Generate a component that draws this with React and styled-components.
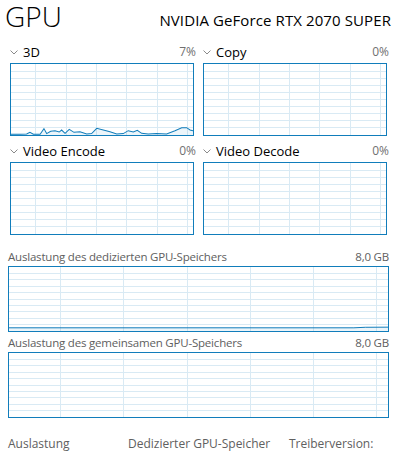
import React from "react";
import styled, { createGlobalStyle } from "styled-components";

const BORDER = "#117dbb";
const GRID = "#d9eaf4";

const engines = [
  {
    name: "3D",
    value: "7%",
    points: [
      [0, 99], [4.9, 99], [8.6, 98.6], [10.4, 96.2], [12.3, 99], [16, 99],
      [18.1, 91], [19.6, 98], [21.8, 94.8], [24.2, 93.9], [26.5, 95.8],
      [27.8, 93], [29.7, 97.6], [32, 92], [34.6, 96.2], [37.9, 95.3],
      [41.6, 98.6], [44.3, 98], [47.1, 90.6], [50.7, 93], [54.4, 95.3],
      [58.1, 98.6], [61.7, 98], [64.4, 93.9], [67.2, 95.8], [69.4, 93.4],
      [71.8, 97.6], [75.4, 98.6], [80, 98], [85.5, 98.6], [90.1, 93.9],
      [93.8, 89.7], [96.5, 89.7], [98.4, 93], [100, 93.9],
    ],
  },
  { name: "Copy", value: "0%" },
  { name: "Video Encode", value: "0%" },
  { name: "Video Decode", value: "0%" },
];

const memory = [
  {
    name: "Auslastung des dedizierten GPU-Speichers",
    value: "8,0 GB",
    gap: 13,
    points: [[0, 95], [91, 95], [94, 94.2], [100, 94]],
  },
  { name: "Auslastung des gemeinsamen GPU-Speichers", value: "8,0 GB", gap: 2 },
];

const vLines = [13.6, 30.3, 47, 63.6, 80.3, 97];
const hLines = [10, 20, 30, 40, 50, 60, 70, 80, 90];

const Graph = ({ points }) => {
  const line = points ? points.map((p) => p.join(",")).join(" ") : null;
  const area = points ? `0,100 ${line} 100,100` : null;
  return (
    <GraphSvg viewBox="0 0 100 100" preserveAspectRatio="none">
      {vLines.map((x) => (
        <line
          key={"v" + x}
          x1={x}
          x2={x}
          y1="0"
          y2="100"
          stroke={GRID}
          strokeWidth="1"
          vectorEffect="non-scaling-stroke"
          shapeRendering="crispEdges"
        />
      ))}
      {hLines.map((y) => (
        <line
          key={"h" + y}
          x1="0"
          x2="100"
          y1={y}
          y2={y}
          stroke={GRID}
          strokeWidth="1"
          vectorEffect="non-scaling-stroke"
          shapeRendering="crispEdges"
        />
      ))}
      {points && (
        <>
          <polygon points={area} fill="rgba(17,125,187,0.08)" />
          <polyline
            points={line}
            fill="none"
            stroke={BORDER}
            strokeWidth="1"
            vectorEffect="non-scaling-stroke"
          />
        </>
      )}
    </GraphSvg>
  );
};

const Chevron = () => (
  <svg width="8" height="5" viewBox="0 0 8 5">
    <polyline points="0.5,0.5 4,4 7.5,0.5" fill="none" stroke="#8a8a8a" strokeWidth="1" />
  </svg>
);

const App = () => {
  return (
    <>
      <GlobalStyle />
      <Page>
        <Header>
          <Title>GPU</Title>
          <DeviceName>NVIDIA GeForce RTX 2070 SUPER</DeviceName>
        </Header>
        <Engines>
          {engines.map((e) => (
            <Engine key={e.name}>
              <EngineHeader>
                <EngineName>
                  <Chevron />
                  {e.name}
                </EngineName>
                <Percent>{e.value}</Percent>
              </EngineHeader>
              <Chart height={73}>
                <Graph points={e.points} />
              </Chart>
            </Engine>
          ))}
        </Engines>
        {memory.map((m) => (
          <Memory key={m.name} gap={m.gap}>
            <MemoryHeader>
              <span>{m.name}</span>
              <span>{m.value}</span>
            </MemoryHeader>
            <Chart height={66}>
              <Graph points={m.points} />
            </Chart>
          </Memory>
        ))}
        <Stats>
          <StatLabel>Auslastung</StatLabel>
          <StatLabel>Dedizierter GPU-Speicher</StatLabel>
          <StatLabel>Treiberversion:</StatLabel>
        </Stats>
      </Page>
    </>
  );
};

const GlobalStyle = createGlobalStyle`
  body {
    margin: 0;
    background: #ffffff;
    font-family: "Open Sans", "Noto Sans", sans-serif;
    overflow: hidden;
  }
`;

const Page = styled.div`
  width: 381px;
  height: 456px;
  padding: 0 16px 0 8px;
  overflow: hidden;
`;

const Header = styled.div`
  display: flex;
  justify-content: space-between;
  align-items: flex-start;
  height: 40px;
`;

const Title = styled.div`
  font-size: 28px;
  font-weight: 300;
  color: #000;
  margin-left: -3px;
  line-height: 32px;
`;

const DeviceName = styled.div`
  font-size: 15px;
  line-height: 20px;
  letter-spacing: 0.1px;
  color: #000;
  margin: 10px -2px 0 0;
`;

const Engines = styled.div`
  display: grid;
  grid-template-columns: 1fr 1fr;
  column-gap: 9px;
  row-gap: 3px;
  padding: 0 2px;
`;

const Engine = styled.div`
  display: flex;
  flex-direction: column;
`;

const EngineHeader = styled.div`
  display: flex;
  justify-content: space-between;
  align-items: center;
  height: 23px;
`;

const EngineName = styled.div`
  display: flex;
  align-items: center;
  gap: 5px;
  font-size: 13px;
  color: #000;
  svg {
    margin-top: 1px;
  }
`;

const Percent = styled.div`
  font-size: 12px;
  color: #707070;
  margin-right: -2px;
`;

const Chart = styled.div`
  height: ${(p) => p.height}px;
  border: 1px solid ${BORDER};
  box-sizing: border-box;
`;

const GraphSvg = styled.svg`
  display: block;
  width: 100%;
  height: 100%;
`;

const Memory = styled.div`
  display: flex;
  flex-direction: column;
  margin-top: ${(p) => p.gap}px;
`;

const MemoryHeader = styled.div`
  display: flex;
  justify-content: space-between;
  align-items: center;
  height: 18px;
  line-height: 16px;
  font-size: 11.5px;
  letter-spacing: -0.2px;
  color: #606060;
`;

const Stats = styled.div`
  display: grid;
  grid-template-columns: 120px 161px auto;
  margin-top: 17px;
`;

const StatLabel = styled.div`
  font-size: 12px;
  line-height: 18px;
  white-space: nowrap;
  color: #606060;
`;

export default App;
